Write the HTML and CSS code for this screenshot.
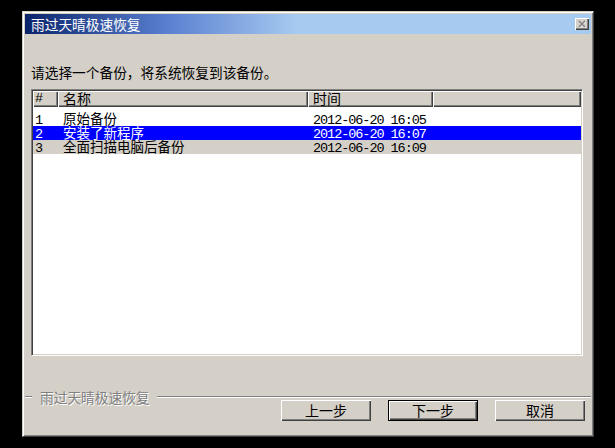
FILE: index.html
```html
<!DOCTYPE html>
<html lang="zh">
<head>
<meta charset="utf-8">
<title>雨过天晴极速恢复</title>
<link rel="stylesheet" href="styles.css">
</head>
<body>
<div class="dialog">
  <div class="titlebar">
    <span class="title">雨过天晴极速恢复</span>
    <span class="close">
      <svg width="14" height="12" viewBox="0 0 14 12">
        <path d="M4.5 3.5 L10.5 9.5 M10.5 3.5 L4.5 9.5" stroke="#ffffff" stroke-width="1.6" fill="none"/>
        <path d="M4 3 L10 9 M10 3 L4 9" stroke="#808080" stroke-width="1.6" fill="none"/>
      </svg>
    </span>
  </div>
  <div class="content">
    <p class="prompt">请选择一个备份，将系统恢复到该备份。</p>
    <div class="list">
      <div class="head">
        <div class="hc c1 mono">#</div>
        <div class="hc c2">名称</div>
        <div class="hc c3">时间</div>
        <div class="hc c4"></div>
      </div>
      <div class="rows">
        <div class="item"><span class="c1 mono">1</span><span class="c2">原始备份</span><span class="c3 mono">2012-06-20 16:05</span></div>
        <div class="item sel"><span class="c1 mono">2</span><span class="c2">安装了新程序</span><span class="c3 mono">2012-06-20 16:07</span></div>
        <div class="item dim"><span class="c1 mono">3</span><span class="c2">全面扫描电脑后备份</span><span class="c3 mono">2012-06-20 16:09</span></div>
      </div>
    </div>
    <div class="etch">
      <span class="etch-line short"></span>
      <span class="etch-label">雨过天晴极速恢复</span>
      <span class="etch-line long"></span>
    </div>
    <div class="buttons">
      <button class="btn">上一步</button>
      <button class="btn default">下一步</button>
      <button class="btn">取消</button>
    </div>
  </div>
</div>
</body>
</html>
```
FILE: styles.css
```css
html {
  background: #000;
}
body {
  margin: 0;
  padding: 11px 0 0 22px;
  width: 615px;
  height: 448px;
  box-sizing: border-box;
  overflow: hidden;
  background: #000;
}
.dialog {
  width: 572px;
  height: 426px;
  box-sizing: border-box;
  border: 1px solid;
  border-color: #d4d0c8 #404040 #404040 #d4d0c8;
  padding: 2px;
  box-shadow: inset 1px 1px #ffffff, inset -1px -1px #808080;
  background: #d4d0c8;
  display: flex;
  flex-direction: column;
  font-family: "Noto Sans CJK SC", "Noto Sans", sans-serif;
  font-size: 14px;
  color: #000;
}
.titlebar {
  height: 20px;
  flex: none;
  display: flex;
  align-items: center;
  justify-content: space-between;
  padding: 0 2px 0 6px;
  background: linear-gradient(to right, #0a246a 0%, #5a7fd0 25%, #a6caf0 48%, #a6caf0 100%);
}
.title {
  color: #fff;
  line-height: 20px;
  font-size: 13.7px;
}
.close {
  width: 14px;
  height: 12px;
  display: flex;
  background: #d4d0c8;
  box-shadow: inset 1px 1px #ffffff, inset -1px -1px #404040, inset -2px -2px #808080;
}
.content {
  flex: 1;
  display: flex;
  flex-direction: column;
}
.prompt {
  margin: 30px 0 0 6px;
  height: 16px;
  line-height: 16px;
  font-size: 13.7px;
}
.list {
  margin: 9px 0 0 6px;
  width: 552px;
  height: 267px;
  box-sizing: border-box;
  border: 1px solid;
  border-color: #808080 #ffffff #ffffff #808080;
  box-shadow: inset 1px 1px #404040, inset -1px -1px #d4d0c8;
  padding: 1px;
  background: #fff;
}
.head {
  display: flex;
  height: 16px;
  background: #d4d0c8;
}
.hc {
  box-sizing: border-box;
  height: 16px;
  line-height: 15px;
  box-shadow: inset 1px 1px #ffffff, inset -1px -1px #404040, inset -2px -2px #808080;
}
.c1 {
  width: 25px;
  flex: none;
  box-sizing: border-box;
  padding-left: 2px;
}
.c2 {
  width: 250px;
  flex: none;
  box-sizing: border-box;
  padding-left: 5px;
}
.c3 {
  width: 125px;
  flex: none;
  box-sizing: border-box;
  padding-left: 5px;
}
.c4 {
  flex: 1;
}
.mono {
  font-family: "Liberation Mono", "DejaVu Sans Mono", monospace;
  font-size: 13.5px;
  letter-spacing: -1.05px;
}
.rows {
  padding-top: 5px;
}
.item {
  height: 14px;
  line-height: 12px;
  font-size: 13.5px;
  white-space: nowrap;
}
.item > span {
  display: inline-block;
  vertical-align: baseline;
  line-height: 12px;
}
.sel {
  background: #0000ff;
  color: #fff;
}
.dim {
  background: #d4d0c8;
}
.etch {
  margin-top: 33px;
  height: 11px;
  display: flex;
}
.etch-line {
  height: 8px;
  box-sizing: border-box;
  border-bottom: 1px solid #808080;
  box-shadow: 0 1px 0 #ffffff;
}
.short {
  width: 7px;
  flex: none;
}
.long {
  flex: 1;
  margin-left: 7px;
}
.etch-label {
  margin-left: 8px;
  height: 16px;
  line-height: 16px;
  font-size: 13.7px;
  color: #808080;
  text-shadow: 1px 1px 0 #ffffff;
  white-space: nowrap;
}
.buttons {
  display: flex;
  justify-content: flex-end;
  gap: 17px;
  padding-right: 6px;
  height: 21px;
}
.btn {
  width: 90px;
  height: 21px;
  box-sizing: border-box;
  margin: 0;
  padding: 0;
  border: 0;
  background: #d4d0c8;
  box-shadow: inset 1px 1px #ffffff, inset -1px -1px #404040, inset -2px -2px #808080;
  font: inherit;
  line-height: 19px;
  color: #000;
  text-align: center;
}
.btn.default {
  border: 1px solid #000;
}
```
